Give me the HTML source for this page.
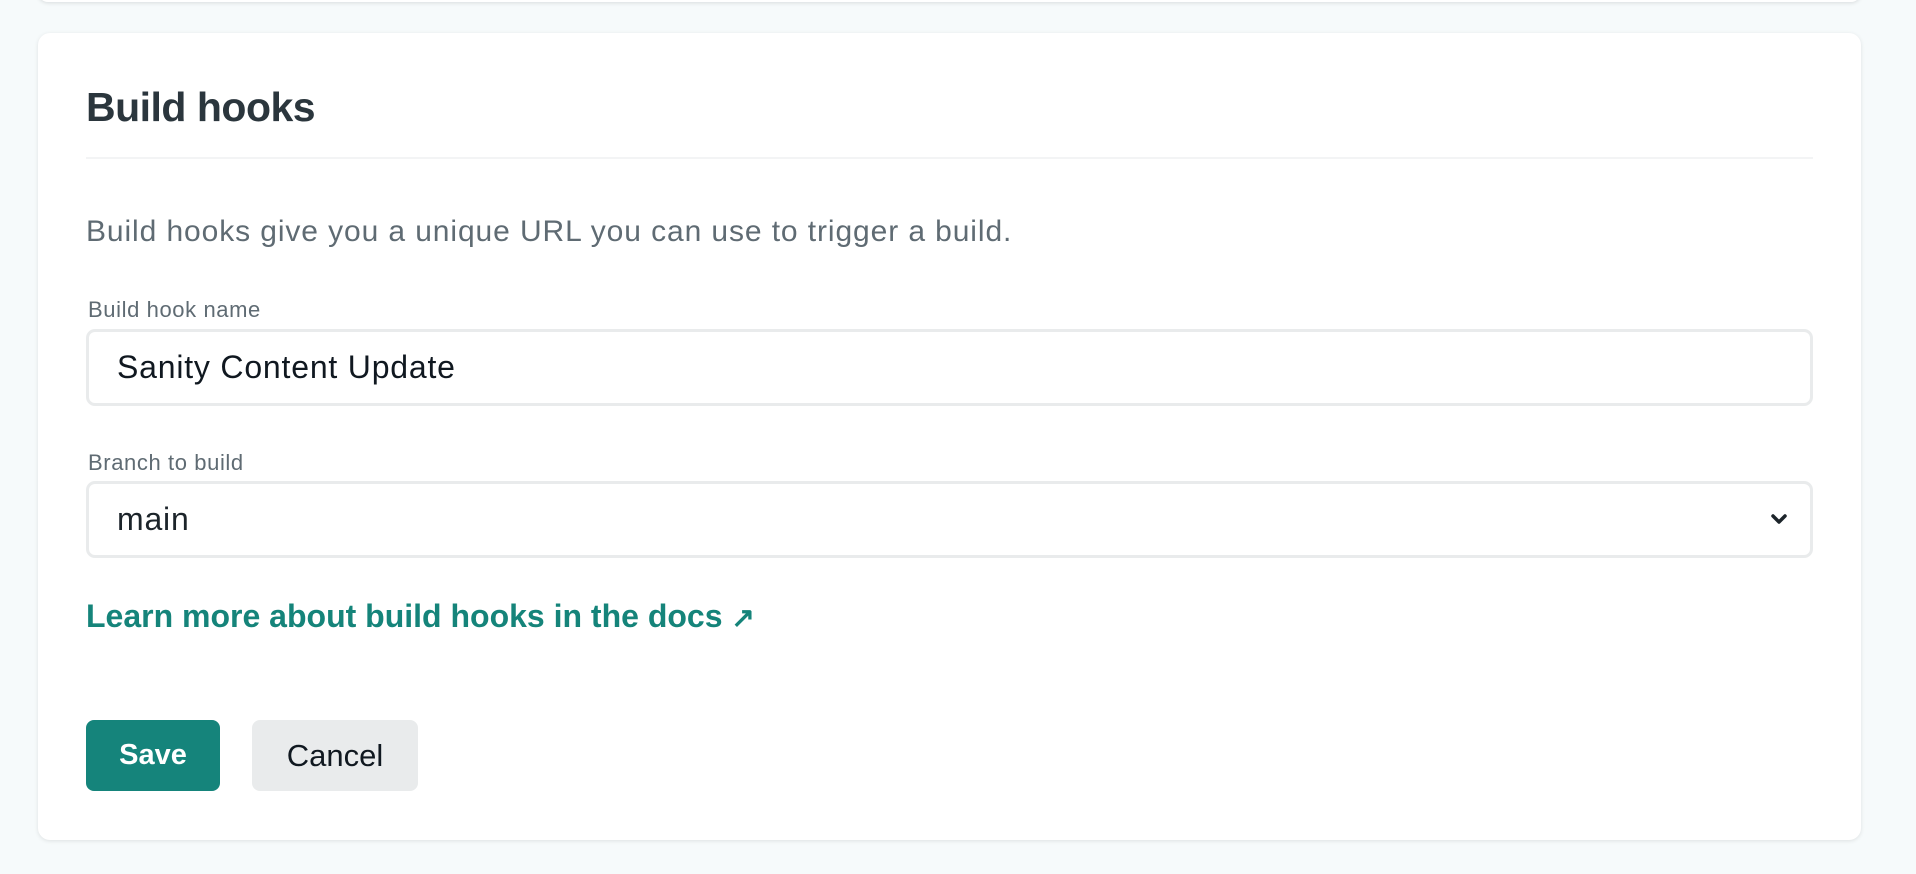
<!DOCTYPE html>
<html><head><meta charset="utf-8"><style>
*{box-sizing:border-box;margin:0;padding:0}
body{width:1916px;height:874px;background:#f6fafb;font-family:"Liberation Sans",sans-serif;position:relative;overflow:hidden}
.topcard{position:absolute;left:38px;right:55px;top:-20px;height:22px;background:#fff;border-radius:10px;box-shadow:0 1px 4px rgba(0,0,0,.12)}
.card{position:absolute;left:38px;top:33px;width:1823px;height:807px;background:#fff;border-radius:12px;box-shadow:0 1px 4px rgba(0,0,0,.1)}
.abs{position:absolute}
h1{position:absolute;left:48px;top:51px;font-size:41px;font-weight:bold;color:#2b363d;letter-spacing:-0.5px}
.hr{position:absolute;left:48px;top:124px;width:1727px;height:2px;background:#f3f4f5}
.desc{left:48px;top:182px;font-size:30px;color:#5f6b73;letter-spacing:0.9px}
.lbl{left:50px;font-size:22px;color:#5f6b73;letter-spacing:0.6px}
.inp{position:absolute;left:48px;width:1727px;height:77px;border:3px solid #e9ebec;border-radius:9px;font-size:32px;color:#101820;padding-left:28px;line-height:71px;letter-spacing:0.8px}
.link{left:48px;top:565px;font-size:32px;font-weight:bold;color:#15847a;letter-spacing:0px}
.btn{position:absolute;top:687px;height:71px;border-radius:8px;font-size:29px;line-height:71px;text-align:center}
</style></head><body>
<div class="topcard"></div>
<div class="card">
<h1>Build hooks</h1>
<div class="hr"></div>
<div class="abs desc">Build hooks give you a unique URL you can use to trigger a build.</div>
<div class="abs lbl" style="top:264px">Build hook name</div>
<div class="inp" style="top:296px">Sanity Content Update</div>
<div class="abs lbl" style="top:417px">Branch to build</div>
<div class="inp" style="top:448px;color:#1c242a">main
<svg class="abs" style="right:22px;top:29px" width="18" height="12" viewBox="0 0 18 12"><path d="M3 3l6 6 6-6" fill="none" stroke="#1c242a" stroke-width="3.5" stroke-linecap="round" stroke-linejoin="round"/></svg></div>
<div class="abs link">Learn more about build hooks in the docs <span style="font-size:28px">↗</span></div>
<div class="btn" style="left:48px;width:134px;background:#15847b;color:#fff;font-weight:bold">Save</div>
<div class="btn" style="left:214px;width:166px;background:#e9ebec;color:#101820;font-size:31px">Cancel</div>
</div>
</body></html>
